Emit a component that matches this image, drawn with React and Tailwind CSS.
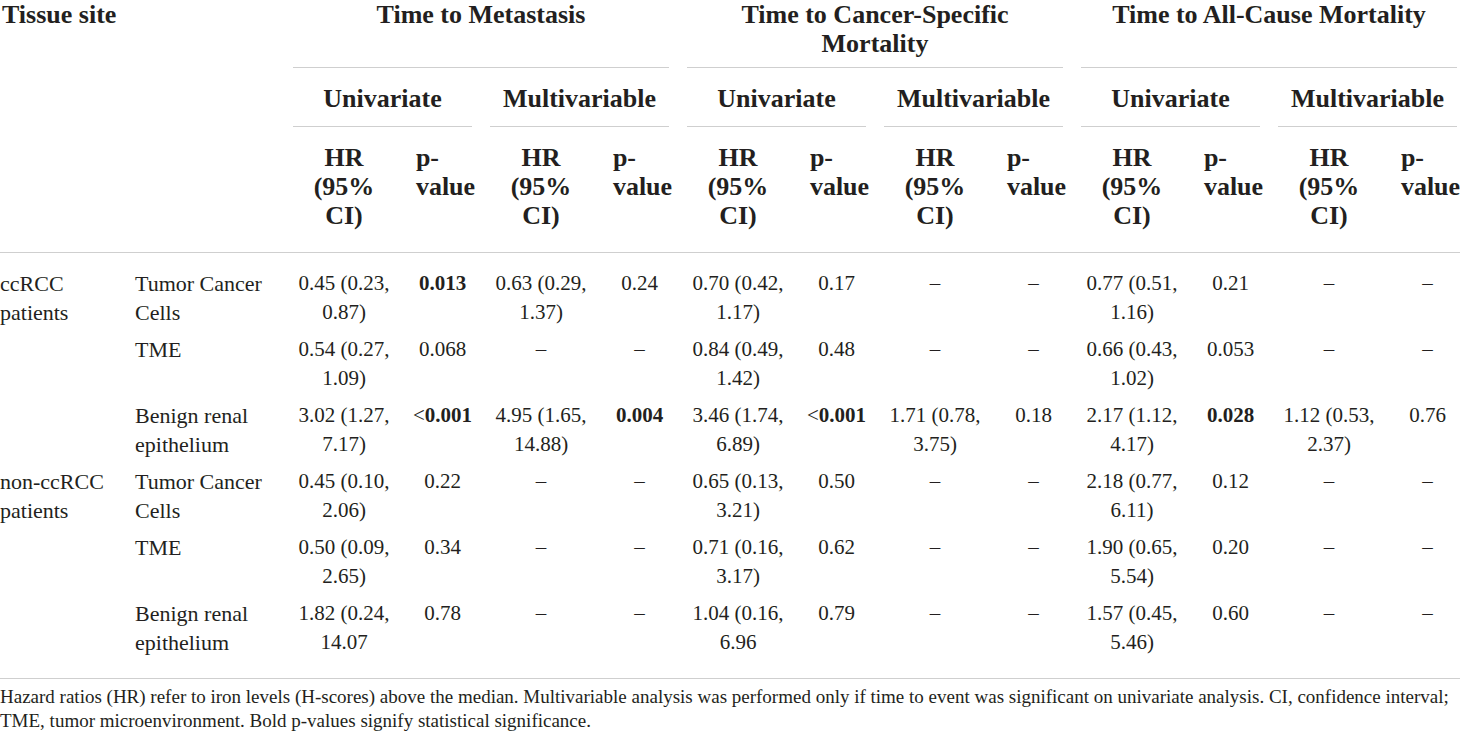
import React from 'react'

const SERIF = { fontFamily: '"Liberation Serif", "Times New Roman", serif' }

// each cell: [hrLines, pValue, bold]
const ROWS = [
  {
    site: ['ccRCC', 'patients'],
    tissue: ['Tumor Cancer', 'Cells'],
    cells: [
      [['0.45 (0.23,', '0.87)'], '0.013', true],
      [['0.63 (0.29,', '1.37)'], '0.24'],
      [['0.70 (0.42,', '1.17)'], '0.17'],
      [['–'], '–'],
      [['0.77 (0.51,', '1.16)'], '0.21'],
      [['–'], '–'],
    ],
  },
  {
    tissue: ['TME'],
    cells: [
      [['0.54 (0.27,', '1.09)'], '0.068'],
      [['–'], '–'],
      [['0.84 (0.49,', '1.42)'], '0.48'],
      [['–'], '–'],
      [['0.66 (0.43,', '1.02)'], '0.053'],
      [['–'], '–'],
    ],
  },
  {
    tissue: ['Benign renal', 'epithelium'],
    cells: [
      [['3.02 (1.27,', '7.17)'], '<0.001', true],
      [['4.95 (1.65,', '14.88)'], '0.004', true],
      [['3.46 (1.74,', '6.89)'], '<0.001', true],
      [['1.71 (0.78,', '3.75)'], '0.18'],
      [['2.17 (1.12,', '4.17)'], '0.028', true],
      [['1.12 (0.53,', '2.37)'], '0.76'],
    ],
  },
  {
    site: ['non-ccRCC', 'patients'],
    tissue: ['Tumor Cancer', 'Cells'],
    cells: [
      [['0.45 (0.10,', '2.06)'], '0.22'],
      [['–'], '–'],
      [['0.65 (0.13,', '3.21)'], '0.50'],
      [['–'], '–'],
      [['2.18 (0.77,', '6.11)'], '0.12'],
      [['–'], '–'],
    ],
  },
  {
    tissue: ['TME'],
    cells: [
      [['0.50 (0.09,', '2.65)'], '0.34'],
      [['–'], '–'],
      [['0.71 (0.16,', '3.17)'], '0.62'],
      [['–'], '–'],
      [['1.90 (0.65,', '5.54)'], '0.20'],
      [['–'], '–'],
    ],
  },
  {
    tissue: ['Benign renal', 'epithelium'],
    cells: [
      [['1.82 (0.24,', '14.07'], '0.78'],
      [['–'], '–'],
      [['1.04 (0.16,', '6.96'], '0.79'],
      [['–'], '–'],
      [['1.57 (0.45,', '5.46)'], '0.60'],
      [['–'], '–'],
    ],
  },
]

const GROUPS = [
  ['Time to Metastasis'],
  ['Time to Cancer-Specific', 'Mortality'],
  ['Time to All-Cause Mortality'],
]

const COLS =
  'grid grid-cols-[135px_158px_102px_95px_102px_95px_102px_95px_102px_95px_102px_95px_102px_95px]'

function Lines({ lines }) {
  return lines.map((l, i) => <div key={i}>{l}</div>)
}

function PValue({ value, bold }) {
  if (!bold) return value
  if (value.startsWith('<')) {
    return (
      <>
        {'<'}
        <b>{value.slice(1)}</b>
      </>
    )
  }
  return <b>{value}</b>
}

export default function App() {
  return (
    <div className="w-[1460px] h-[738px] overflow-hidden bg-white text-[#231f20]" style={SERIF}>
      {/* Header */}
      <div className={`${COLS} w-[1475px] font-bold text-[26px] border-b border-[#cfcfcf]`}>
        <div className="col-span-2 row-span-3 leading-[29px] pl-[2px]">Tissue site</div>

        {GROUPS.map((g, i) => (
          <div key={i} className="col-span-4 pr-[18px]">
            <div className="h-[68px] border-b border-[#cfcfcf] text-center leading-[29px]">
              <Lines lines={g} />
            </div>
          </div>
        ))}

        {[0, 1, 2, 3, 4, 5].map((i) => (
          <div key={i} className="col-span-2 pr-[18px]">
            <div className="pt-[16px] pb-[13px] border-b border-[#cfcfcf] text-center leading-[29px]">
              {i % 2 === 0 ? 'Univariate' : 'Multivariable'}
            </div>
          </div>
        ))}

        {[0, 1, 2, 3, 4, 5].map((i) => (
          <React.Fragment key={i}>
            <div className="pt-[16px] pb-[22px] text-center leading-[29px]">
              <div>HR</div>
              <div>(95%</div>
              <div>CI)</div>
            </div>
            <div className="pt-[16px] pb-[22px] text-center leading-[29px] pl-[6px]">
              <div className="inline-block text-left">
                <div>p-</div>
                <div>value</div>
              </div>
            </div>
          </React.Fragment>
        ))}
      </div>

      {/* Body */}
      <div className={`${COLS} w-[1475px] pt-[12px] pb-[17px] text-[21px] leading-[29px] border-b border-[#cfcfcf]`}>
        {ROWS.map((r, ri) => (
          <React.Fragment key={ri}>
            <div className="py-[4px] text-[22px]">{r.site && <Lines lines={r.site} />}</div>
            <div className="py-[4px] text-[22px]">
              <Lines lines={r.tissue} />
            </div>
            {r.cells.map(([hr, p, bold], ci) => (
              <React.Fragment key={ci}>
                <div className="py-[4px] text-center">
                  <Lines lines={hr} />
                </div>
                <div className="py-[4px] text-center">
                  <PValue value={p} bold={bold} />
                </div>
              </React.Fragment>
            ))}
          </React.Fragment>
        ))}
      </div>

      {/* Footnote */}
      <div className="pt-[6px] text-[19px] leading-[24px] whitespace-nowrap">
        <div>
          Hazard ratios (HR) refer to iron levels (H-scores) above the median. Multivariable analysis was performed
          only if time to event was significant on univariate analysis. CI, confidence interval;
        </div>
        <div>TME, tumor microenvironment. Bold p-values signify statistical significance.</div>
      </div>
    </div>
  )
}
